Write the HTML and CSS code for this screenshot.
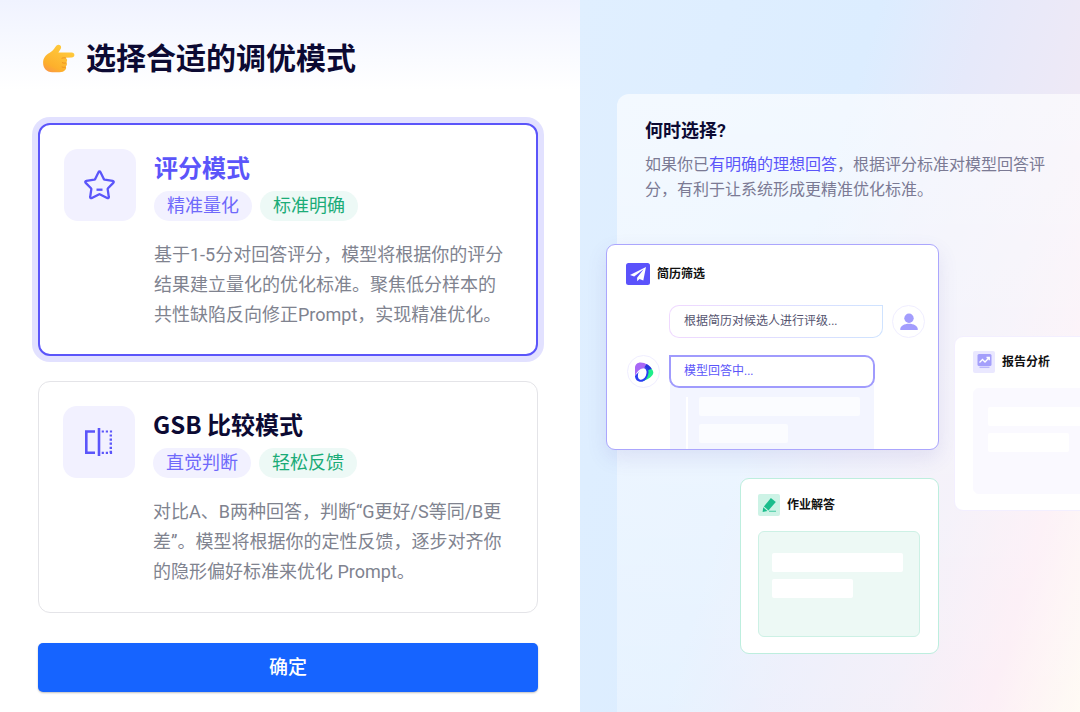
FILE: index.html
```html
<!DOCTYPE html>
<html lang="zh-CN">
<head>
<meta charset="utf-8">
<meta name="viewport" content="width=device-width, initial-scale=1">
<title>选择合适的调优模式</title>
<link rel="stylesheet" href="styles.css">
</head>
<body>
<main class="layout">
  <form class="chooser">
    <h1 class="heading">
      <svg class="heading-icon" viewBox="0 0 32 30" aria-hidden="true">
        <defs>
          <linearGradient id="hand" x1="0" y1="1" x2=".6" y2="0">
            <stop offset="0" stop-color="#f98f4e"/>
            <stop offset=".3" stop-color="#fdb02c"/>
            <stop offset="1" stop-color="#ffcb3d"/>
          </linearGradient>
        </defs>
        <path fill="url(#hand)" d="M17.600 1.200c1.600 1.100 1.200 3-.1 4.900l-1.600 2.300h13.300c1.600 0 2.700 1.100 2.700 2.500s-1.100 2.500-2.700 2.500l-6.600.4c2.300.7 2.700 3.300 1.100 4.500 1.200 1.200 1 3.300-.5 4.200.8 1.200.5 2.800-.6 3.600-1.200 1.800-3.200 2.100-5.500 2.100H9.700C3.900 28.200.6 24 .6 18.800c0-4.600 2.500-7.700 6.200-9.700 2.700-1.600 4.400-3.300 5.700-5.500C13.800.9 15.800 0 17.600 1.200z"/>
        <path fill="none" stroke="#ee9320" stroke-width="1" stroke-linecap="round" d="M19.500 14.200c1.200-.5 2.400-.5 3.600-.3M19.800 18.700c1.300.6 2.600.6 3.800.2M19.600 23c1.200.5 2.300.5 3.400.1"/>
      </svg>
      选择合适的调优模式
    </h1>

    <div class="modes" role="radiogroup" aria-label="调优模式">
      <label class="mode mode-selected">
        <input class="mode-input" type="radio" name="mode" value="score" checked>
        <span class="mode-icon">
          <svg viewBox="0 0 32 32" width="32" height="32" fill="none" stroke="#5b55fa" stroke-width="2.300" stroke-linejoin="round" aria-hidden="true">
            <path d="M15.500 2.500c.5 0 .8.4 1 .8l3.300 6.700c.2.300.5.600.9.700l7.900 1.100c1.100.2 1.500 1.300.7 2.100l-5.300 5.400c-.3.300-.4.600-.3 1l1.100 7.500c.2 1-.8 1.700-1.700 1.200l-6.900-3.600a1.500 1.500 0 0 0-1.400 0L7.900 29c-.9.500-1.900-.2-1.700-1.200l1.100-7.500c.1-.4 0-.7-.3-1l-5.300-5.400c-.8-.8-.4-1.900.7-2.100l7.900-1.100c.4-.1.7-.4.9-.700l3.300-6.700c.2-.4.5-.8 1-.8z"/>
            <path d="M12.500 20.700h6"/>
          </svg>
        </span>
        <span class="mode-body">
          <span class="mode-title">评分模式</span>
          <span class="tags"><span class="tag tag-violet">精准量化</span><span class="tag tag-green">标准明确</span></span>
          <span class="mode-text">基于1-5分对回答评分，模型将根据你的评分结果建立量化的优化标准。聚焦低分样本的共性缺陷反向修正Prompt，实现精准优化。</span>
        </span>
      </label>

      <label class="mode">
        <input class="mode-input" type="radio" name="mode" value="gsb">
        <span class="mode-icon">
          <svg viewBox="0 0 32 32" width="32" height="32" fill="none" stroke="#5b55fa" aria-hidden="true">
            <path stroke-width="2.600" d="M12 5.500H3.300v21.300H12"/>
            <path stroke-width="2.600" d="M16 2v28"/>
            <path stroke-width="2.200" stroke-dasharray="2.200 1.900" d="M18.700 5.500h10.600M18.700 26.800h10.600"/>
            <path stroke-width="2.400" stroke-dasharray="2.200 1.900" d="M27.800 8.400v18.400"/>
          </svg>
        </span>
        <span class="mode-body">
          <span class="mode-title">GSB 比较模式</span>
          <span class="tags"><span class="tag tag-violet">直觉判断</span><span class="tag tag-green">轻松反馈</span></span>
          <span class="mode-text">对比A、B两种回答，判断“G更好/S等同/B更差”。模型将根据你的定性反馈，逐步对齐你的隐形偏好标准来优化 Prompt。</span>
        </span>
      </label>
    </div>

    <button class="confirm" type="button">确定</button>
  </form>

  <aside class="preview">
    <section class="panel">
      <h2 class="panel-title">何时选择?</h2>
      <p class="panel-text">如果你已<span class="accent">有明确的理想回答</span>，根据评分标准对模型回答评分，有利于让系统形成更精准优化标准。</p>
    </section>

    <section class="card card-resume">
      <h3 class="card-title">
        <svg viewBox="0 0 24 22" width="24" height="22" aria-hidden="true">
          <rect width="24" height="22" rx="2.500" fill="#5b52fb"/>
          <path fill="#fff" d="M20 4 4 11.900l4.200 1.700L17.600 6.300l-6.500 8.500.1 3.500 2.300-2.400 3.800 1.600z"/>
        </svg>
        简历筛选
      </h3>
      <div class="chat">
        <div class="turn turn-user">
          <p class="bubble bubble-user">根据简历对候选人进行评级...</p>
          <span class="avatar">
            <svg viewBox="0 0 18 18" width="18" height="18" fill="#a39dfd" aria-hidden="true"><circle cx="9" cy="5.200" r="4.700"/><path d="M1 17c-.6 0-.9-.4-.8-1C.8 13 4 10.800 9 10.800s8.200 2.200 8.800 5.200c.1.600-.2 1-.8 1z"/></svg>
          </span>
        </div>
        <div class="turn">
          <span class="avatar">
            <svg viewBox="0 0 20 20" width="20" height="20" aria-hidden="true">
              <path fill="#1fee8a" d="M12.500 3.500c3.500 1.400 6.800 4.500 6.800 7.100 0 3.300-4.500 6.400-9.500 8.300z"/>
              <path fill="#2a3ff2" d="M9.500 5.200c3.600-.4 5.200 1.600 5 5-.3 5-3.600 9.600-7.600 9.600-3.600 0-5.900-2.300-5.900-6z"/>
              <path fill="#a868f6" d="M1 14.200V6C1 2.500 3.300.4 6.600.4c2.600 0 4.600.7 6.600 2.100l.3 3.500-5 .6C5.500 7 3 9.500 1 14.200z"/>
              <path fill="#2537dc" d="M12.600 2.100c2.400 1.300 4.300 3 5.200 4.800l-3.600 1c-.8-1.700-2-2.400-4-2.500z"/>
              <ellipse cx="8.200" cy="12" rx="4" ry="6" fill="#fff" transform="rotate(24 8.200 12)"/>
            </svg>
          </span>
          <div class="answer">
            <p class="bubble bubble-model">模型回答中...</p>
            <div class="draft">
              <span class="bar bar-long"></span>
              <span class="bar bar-short"></span>
            </div>
          </div>
        </div>
      </div>
    </section>

    <section class="card card-report">
      <h3 class="card-title">
        <svg viewBox="0 0 22 22" width="22" height="22" aria-hidden="true">
          <rect width="22" height="22" rx="2" fill="#eae8ff"/>
          <rect x="4.500" y="3" width="14" height="12" rx="1.500" fill="#a49ffb"/>
          <path fill="none" stroke="#fff" stroke-width="1.300" d="m6.500 11.500 3-3 2.500 2.500 4-4.300M13.500 6.500h2.800v2.800"/>
          <path stroke="#b9b5fb" stroke-width="1.500" d="M6.500 16.300h10"/>
        </svg>
        报告分析
      </h3>
      <div class="sheet">
        <span class="bar bar-long"></span>
        <span class="bar bar-short"></span>
      </div>
    </section>

    <section class="card card-homework">
      <h3 class="card-title">
        <svg viewBox="0 0 22 22" width="22" height="22" aria-hidden="true">
          <rect width="22" height="22" rx="2" fill="#cdf3e6"/>
          <path fill="#1bbd8c" d="m12.900 4.100 4.900 3.900-7.300 8.400-4.600-3.900z"/>
          <path fill="#1bbd8c" d="m5.200 13.300 4.300 3.600-4.900 1.200z"/>
          <path stroke="#5fd3b0" stroke-width="1.300" d="M11 17.300h7"/>
        </svg>
        作业解答
      </h3>
      <div class="sheet">
        <span class="bar bar-long"></span>
        <span class="bar bar-short"></span>
      </div>
    </section>
  </aside>
</main>
</body>
</html>
```
FILE: styles.css
```css
* {
  box-sizing: border-box;
}

body {
  margin: 0;
  font-family: Roboto, "Noto Sans CJK SC", sans-serif;
  color: #0c0a33;
  background: #fff;
}

h1,
h2,
h3,
p {
  margin: 0;
}

.layout {
  display: grid;
  grid-template-columns: 29fr 25fr;
  min-height: 100vh;
}

/* Left: mode chooser */

.chooser {
  padding: 36px 42px 20px 38px;
  background: linear-gradient(#f0f3ff 0, #fff 90px);
}

.heading {
  display: flex;
  align-items: center;
  gap: 11px;
  margin-bottom: 41px;
  padding-left: 4px;
  font-size: 30px;
  font-weight: 700;
  line-height: 46px;
}

.heading-icon {
  width: 33px;
  height: 30px;
}

.modes {
  display: grid;
  gap: 25px;
}

.mode {
  position: relative;
  display: flex;
  align-items: flex-start;
  gap: 18px;
  padding: 24px 24px 25px;
  border: 1px solid #e4e4e8;
  border-radius: 12px;
  background: #fff;
  cursor: pointer;
}

.mode-selected {
  padding-bottom: 24px;
  border: 2px solid #5b55fa;
  box-shadow: 0 0 0 6px #e2e1ff;
}

.mode-input {
  position: absolute;
  inset: 0;
  margin: 0;
  border-radius: 12px;
  appearance: none;
  cursor: pointer;
}

.mode-icon {
  display: grid;
  flex: none;
  place-items: center;
  width: 72px;
  height: 72px;
  border-radius: 14px;
  background: #f2f1ff;
}

.mode-body {
  display: flex;
  flex-direction: column;
  flex: 1;
  min-width: 0;
}

.mode-title {
  font-family: "Noto Sans CJK SC", sans-serif;
  font-size: 24px;
  font-weight: 600;
  line-height: 36px;
}

.mode-selected .mode-title {
  color: #5b55fa;
}

.tags {
  display: flex;
  gap: 8px;
  margin: 6px 0 19px;
}

.tag {
  padding: 0 13px;
  border-radius: 15px;
  font-size: 18px;
  line-height: 30px;
}

.tag-violet {
  color: #6f69fb;
  background: #f2f1ff;
}

.tag-green {
  color: #1bac78;
  background: #edf9f6;
}

.mode-text {
  font-size: 18px;
  line-height: 30px;
  color: #80838f;
}

.confirm {
  display: block;
  width: 100%;
  margin-top: 30px;
  padding: 0;
  border: 0;
  border-radius: 5px;
  font: 500 19px/49px Roboto, "Noto Sans CJK SC", sans-serif;
  color: #fff;
  background: #1664ff;
  box-shadow: 0 1px 2px rgba(0, 0, 0, 0.25);
}

/* Right: illustration */

.preview {
  position: relative;
  display: flex;
  overflow: hidden;
  padding: 94px 0 0 37px;
  background: linear-gradient(107deg, #e0efff 0%, #dcedff 42%, #e6e9fa 57%, #eee9f6 73%, #fbe8f2 87%, #fff9f0 100%);
}

.panel {
  flex: 1;
  padding: 24px 28px;
  border-radius: 12px 0 0;
  background: linear-gradient(rgba(255, 255, 255, 0.64), rgba(255, 255, 255, 0.3));
}

.panel-title {
  font-size: 18px;
  font-weight: 600;
  line-height: 26px;
}

.panel-text {
  margin-top: 8px;
  font-size: 16px;
  line-height: 25px;
  color: #7b7a94;
}

.accent {
  color: #5b55fa;
}

.card {
  position: absolute;
  border: 1px solid #bdeede;
  border-radius: 9px;
  background: #fff;
}

.card-title {
  display: flex;
  align-items: center;
  gap: 7px;
  font-size: 12px;
  font-weight: 600;
  line-height: 22px;
  color: #111;
}

.card-resume {
  top: 244px;
  left: 26px;
  width: 333px;
  padding: 18px 12px 0 19px;
  overflow: hidden;
  border-color: #aba6fd;
  box-shadow: 0 8px 20px rgba(90, 80, 180, 0.12);
}

.card-report {
  top: 336px;
  left: 374px;
  width: 199px;
  padding: 14px 18px 16px;
  border-color: #f3efff;
}

.card-homework {
  top: 478px;
  left: 160px;
  width: 199px;
  padding: 15px 18px 16px 17px;
}

.chat {
  display: grid;
  gap: 17px;
  margin-top: 20px;
  padding: 0 1px;
}

.turn {
  display: flex;
  gap: 9px;
}

.turn-user {
  padding-left: 42px;
}

.avatar {
  display: grid;
  flex: none;
  place-items: center;
  width: 33px;
  height: 33px;
  border: 1px solid #f0eeff;
  border-radius: 50%;
}

.bubble {
  padding: 0 14px;
  font-size: 12px;
}

.bubble-user {
  flex: 1;
  border: 1px solid transparent;
  border-radius: 10px 0 10px 10px;
  line-height: 31px;
  color: #55546f;
  background: linear-gradient(#fff, #fff) padding-box, linear-gradient(90deg, #f0d9ff, #cfe3ff) border-box;
}

.answer {
  width: 206px;
}

.bubble-model {
  position: relative;
  padding: 0 13px;
  border: 2px solid #a09bfd;
  border-radius: 0 10px 10px 10px;
  line-height: 29px;
  color: #5b55fa;
  background: #fff;
}

.draft {
  display: grid;
  gap: 8px;
  margin: -4px 1px 0;
  padding: 13px 14px 6px 29px;
  background: linear-gradient(#fff, #fff) 16px 13px / 2px 100% no-repeat, #f3f5ff;
}

.bar {
  height: 19px;
  border-radius: 2px;
  background: #fff;
}

.draft .bar {
  background: #fbfcff;
}

.bar-long {
  width: 100%;
}

.bar-short {
  width: 62%;
}

.draft .bar-short {
  width: 55%;
}

.sheet {
  display: grid;
  align-content: start;
  gap: 7px;
  min-height: 106px;
  margin-top: 15px;
  padding: 21px 16px 21px 13px;
  border: 1px solid #cdf1e5;
  border-radius: 6px;
  background: #edf9f5;
}

.card-report .sheet {
  padding: 18px 14px;
  border-color: #faf9ff;
  background: #faf9ff;
}
```
